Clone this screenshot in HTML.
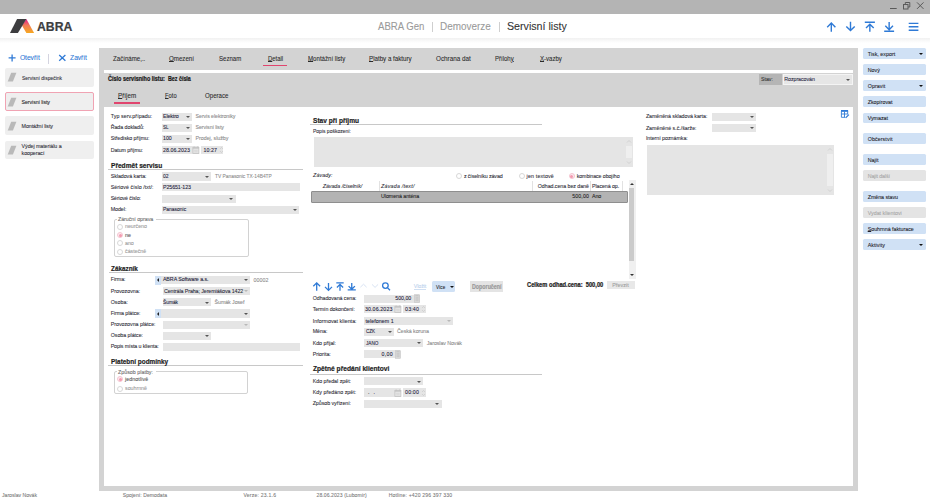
<!DOCTYPE html><html><head><meta charset="utf-8"><style>html,body{margin:0;padding:0;width:930px;height:500px;overflow:hidden;background:#fff;font-family:"Liberation Sans",sans-serif}body>div,body>span,body>svg{position:absolute}u{text-decoration-thickness:0.5px;text-underline-offset:0.3px}</style></head><body>
<div style="left:0px;top:0px;width:930.00px;height:14.00px;background:#b4b4b4;"></div>
<div style="left:0px;top:37.8px;width:930.00px;height:5.20px;background:linear-gradient(#f1f1f1,#fbfbfb 70%,#ffffff);"></div>
<svg style="left:886px;top:0px" width="44" height="13" viewBox="0 0 44 13"><g stroke="#5a5a5a" stroke-width="1" fill="none"><path d="M4 8.5h6.7"/><path d="M19.3 4.5v-2h4.5v4.5h-1.8"/><rect x="17.5" y="4.5" width="4.5" height="4.5" fill="#b4b4b4"/><path d="M31 2.4l6.5 6.5M37.5 2.4l-6.5 6.5"/></g></svg>
<svg style="left:9px;top:18px" width="28" height="16" viewBox="0 0 28 16"><defs><linearGradient id="lg" x1="0" y1="0" x2="0" y2="1"><stop offset="0" stop-color="#e4148c"/><stop offset="0.45" stop-color="#f07a5a"/><stop offset="1" stop-color="#f6a821"/></linearGradient></defs><path d="M17.4 0.9 L25.1 14.9 L17.4 14.9 L12.9 7.4 Z" fill="url(#lg)"/><path d="M8.1 0.9 L17.4 0.9 L8.9 14.9 L1 14.9 Z" fill="#3d3d3f"/></svg>
<svg style="left:820px;top:18px" width="105" height="18" viewBox="0 0 105 18"><g stroke="#2f7ad6" stroke-width="1.4" fill="none" stroke-linecap="butt"><path d="M11.3 5.2v8.6M7.2 9.2l4.1-4.1 4.1 4.1"/><path d="M30.5 3.7v8.8M26.3 8.4l4.2 4.2 4.2-4.2"/><path d="M44.8 4.3h10.1M49.85 6.2v7.6M46 10l3.85-3.85 3.85 3.85"/><path d="M64.2 13.2h9.9M69.15 4v7.6M65.3 7.8l3.85 3.85 3.85-3.85"/><path d="M88.7 5.4h9.7M88.7 8.8h9.7M88.7 12.2h9.7"/></g></svg>
<div style="left:432px;top:22px;width:1px;height:10px;background:#cfcfcf"></div>
<div style="left:499px;top:22px;width:1px;height:10px;background:#cfcfcf"></div>
<svg style="left:8px;top:54px" width="60" height="9" viewBox="0 0 60 9"><g stroke="#2f7ad6" stroke-width="1.3" fill="none"><path d="M0.6 3.8h7M4.1 0.4v7"/><path d="M51.2 1l6.2 5.7M57.4 1l-6.2 5.7"/></g></svg>
<div style="left:48.3px;top:53.9px;width:1.00px;height:9.70px;background:#d4d4e0;"></div>
<div style="left:5px;top:68px;width:89.00px;height:18.60px;background:#efefef;border-radius:2px;"></div>
<svg style="left:7px;top:72.3px" width="12" height="10" viewBox="0 0 12 10"><path d="M4.2 0.8h5.2L5.9 9.4H0.7Z" fill="#b9b9b9"/></svg>
<div style="left:5px;top:92.2px;width:89.00px;height:19.30px;background:#efefef;border:1px solid #f0a3b3;box-sizing:border-box;border-radius:2px;"></div>
<svg style="left:7px;top:96.8px" width="12" height="10" viewBox="0 0 12 10"><path d="M4.2 0.8h5.2L5.9 9.4H0.7Z" fill="#b9b9b9"/></svg>
<div style="left:5px;top:116.4px;width:89.00px;height:18.60px;background:#efefef;border-radius:2px;"></div>
<svg style="left:7px;top:120.7px" width="12" height="10" viewBox="0 0 12 10"><path d="M4.2 0.8h5.2L5.9 9.4H0.7Z" fill="#b9b9b9"/></svg>
<div style="left:5px;top:140.6px;width:89.00px;height:18.40px;background:#efefef;border-radius:2px;"></div>
<svg style="left:7px;top:144.8px" width="12" height="10" viewBox="0 0 12 10"><path d="M4.2 0.8h5.2L5.9 9.4H0.7Z" fill="#b9b9b9"/></svg>
<div style="left:99.2px;top:48px;width:758.80px;height:442.60px;background:#d3d3d3;"></div>
<div style="left:104px;top:69.6px;width:749.30px;height:3.20px;background:#ffffff;"></div>
<div style="left:104px;top:106.8px;width:749.20px;height:379.00px;background:#ffffff;"></div>
<div style="left:263px;top:64.6px;width:23.70px;height:1.30px;background:#e0456e;"></div>
<div style="left:113.8px;top:102.4px;width:26.60px;height:1.30px;background:#e0456e;"></div>
<div style="left:758.9px;top:73.9px;width:23.60px;height:10.70px;background:#b5b5b5;"></div>
<div style="left:782.5px;top:73.9px;width:70.20px;height:10.70px;background:#e6e6e6;border:1px solid #f4f4f4;box-sizing:border-box;"></div>
<div style="left:845.5px;top:78.5px;width:0;height:0;border-left:2.2px solid transparent;border-right:2.2px solid transparent;border-top:2.7px solid #555"></div>
<div style="left:162.4px;top:112.6px;width:29.70px;height:8.10px;background:#e5e5e5;"></div>
<div style="left:186.1px;top:115.9px;width:0;height:0;border-left:2.2px solid transparent;border-right:2.2px solid transparent;border-top:2.7px solid #555"></div>
<div style="left:162.4px;top:123.7px;width:29.70px;height:8.10px;background:#e5e5e5;"></div>
<div style="left:186.1px;top:127.0px;width:0;height:0;border-left:2.2px solid transparent;border-right:2.2px solid transparent;border-top:2.7px solid #555"></div>
<div style="left:162.4px;top:134.8px;width:29.70px;height:8.10px;background:#e5e5e5;"></div>
<div style="left:186.1px;top:138.1px;width:0;height:0;border-left:2.2px solid transparent;border-right:2.2px solid transparent;border-top:2.7px solid #555"></div>
<div style="left:162.4px;top:146px;width:36.60px;height:8.10px;background:#e5e5e5;"></div>
<svg style="left:192.0px;top:146.0px" width="8" height="8" viewBox="0 0 8 8"><g fill="none" stroke="#c2c2c2" stroke-width="0.8"><rect x="0.9" y="1.4" width="6" height="6"/><path d="M0.9 2.3h6M2.1 0.4v1.5M5.7 0.4v1.5"/><path d="M2.2 4.4h3.4M2.2 5.8h3.4" stroke="#d4d4d4"/></g></svg>
<div style="left:201.1px;top:146px;width:22.40px;height:8.10px;background:#e5e5e5;"></div>
<svg style="left:218.7px;top:146.0px" width="5" height="8" viewBox="0 0 5 8"><path d="M1 3l1.5-1.5L4 3M1 5l1.5 1.5L4 5" stroke="#c4c4c4" stroke-width="0.6" fill="none"/></svg>
<div style="left:108.2px;top:168.8px;width:194.50px;height:1.00px;background:#c8c8c8;"></div>
<div style="left:162.4px;top:172px;width:48.90px;height:8.90px;background:#e5e5e5;"></div>
<div style="left:204.9px;top:175.8px;width:0;height:0;border-left:2.2px solid transparent;border-right:2.2px solid transparent;border-top:2.7px solid #555"></div>
<div style="left:162.4px;top:183.4px;width:137.20px;height:8.10px;background:#e5e5e5;"></div>
<div style="left:162.4px;top:194.6px;width:73.30px;height:8.30px;background:#e5e5e5;"></div>
<div style="left:229.4px;top:197.9px;width:0;height:0;border-left:2.2px solid transparent;border-right:2.2px solid transparent;border-top:2.7px solid #555"></div>
<div style="left:162.4px;top:206px;width:136.40px;height:7.90px;background:#e5e5e5;"></div>
<div style="left:292.5px;top:209.1px;width:0;height:0;border-left:2.2px solid transparent;border-right:2.2px solid transparent;border-top:2.7px solid #555"></div>
<div style="left:113.6px;top:219.0px;width:135.0px;height:37.6px;border:1px solid #d2d2d2;box-sizing:border-box;border-radius:2px"></div>
<div style="left:116.5px;top:217.6px;width:39.20px;height:4.00px;background:#ffffff;"></div>
<div style="left:117.0px;top:223.5px;width:6.2px;height:6.2px;border-radius:50%;border:0.7px solid #d8d8d8;box-sizing:border-box"></div>
<div style="left:117.0px;top:231.9px;width:6.2px;height:6.2px;border-radius:50%;border:0.7px solid #f5c6d1;background:#fdeaf0;box-sizing:border-box"></div>
<div style="left:118.6px;top:233.5px;width:3px;height:3px;border-radius:50%;background:#f49bb0"></div>
<div style="left:117.0px;top:240.3px;width:6.2px;height:6.2px;border-radius:50%;border:0.7px solid #d8d8d8;box-sizing:border-box"></div>
<div style="left:117.0px;top:248.5px;width:6.2px;height:6.2px;border-radius:50%;border:0.7px solid #d8d8d8;box-sizing:border-box"></div>
<div style="left:108.6px;top:272.1px;width:194.30px;height:1.00px;background:#c8c8c8;"></div>
<div style="left:155.2px;top:276px;width:5.80px;height:8.60px;background:#d0e1f5;"></div>
<div style="left:156.9px;top:278.3px;width:0;height:0;border-top:2px solid transparent;border-bottom:2px solid transparent;border-right:2.4px solid #222"></div>
<div style="left:161px;top:276px;width:89.30px;height:8.30px;background:#e5e5e5;"></div>
<div style="left:243.7px;top:279.1px;width:0;height:0;border-left:2.2px solid transparent;border-right:2.2px solid transparent;border-top:2.7px solid #555"></div>
<div style="left:162.5px;top:287.3px;width:87.80px;height:8.20px;background:#e5e5e5;"></div>
<div style="left:164px;top:287.3px;width:79.5px;height:8.2px;overflow:hidden;position:absolute"></div>
<div style="left:243.3px;top:287.3px;width:2.70px;height:8.20px;background:#e5e5e5;"></div>
<div style="left:244.1px;top:290.4px;width:0;height:0;border-left:2.2px solid transparent;border-right:2.2px solid transparent;border-top:2.7px solid #b8b8b8"></div>
<div style="left:162.5px;top:298.2px;width:48.50px;height:8.20px;background:#e5e5e5;"></div>
<div style="left:204.7px;top:301.5px;width:0;height:0;border-left:2.2px solid transparent;border-right:2.2px solid transparent;border-top:2.7px solid #555"></div>
<div style="left:155.2px;top:309.4px;width:5.80px;height:8.60px;background:#d0e1f5;"></div>
<div style="left:156.9px;top:311.7px;width:0;height:0;border-top:2px solid transparent;border-bottom:2px solid transparent;border-right:2.4px solid #222"></div>
<div style="left:161px;top:309.4px;width:89.30px;height:8.20px;background:#e5e5e5;"></div>
<div style="left:243.7px;top:312.8px;width:0;height:0;border-left:2.2px solid transparent;border-right:2.2px solid transparent;border-top:2.7px solid #555"></div>
<div style="left:162.5px;top:320.7px;width:87.70px;height:8.20px;background:#e5e5e5;"></div>
<div style="left:243.9px;top:324.0px;width:0;height:0;border-left:2.2px solid transparent;border-right:2.2px solid transparent;border-top:2.7px solid #b8b8b8"></div>
<div style="left:162.5px;top:331.7px;width:48.60px;height:8.20px;background:#e5e5e5;"></div>
<div style="left:204.8px;top:335.1px;width:0;height:0;border-left:2.2px solid transparent;border-right:2.2px solid transparent;border-top:2.7px solid #555"></div>
<div style="left:163.1px;top:342.9px;width:136.60px;height:8.40px;background:#e5e5e5;"></div>
<div style="left:108.3px;top:365.3px;width:194.60px;height:1.00px;background:#c8c8c8;"></div>
<div style="left:113.7px;top:371.3px;width:134.8px;height:23.2px;border:1px solid #d2d2d2;box-sizing:border-box;border-radius:2px"></div>
<div style="left:116.5px;top:369.9px;width:39.00px;height:4.00px;background:#ffffff;"></div>
<div style="left:117.0px;top:376.3px;width:6.2px;height:6.2px;border-radius:50%;border:0.7px solid #f5c6d1;background:#fdeaf0;box-sizing:border-box"></div>
<div style="left:118.6px;top:377.9px;width:3px;height:3px;border-radius:50%;background:#f49bb0"></div>
<div style="left:117.0px;top:385.6px;width:6.2px;height:6.2px;border-radius:50%;border:0.7px solid #d8d8d8;box-sizing:border-box"></div>
<div style="left:309.8px;top:123.8px;width:232.70px;height:1.00px;background:#c8c8c8;"></div>
<div style="left:313.5px;top:137px;width:319.80px;height:29.80px;background:#e5e5e5;"></div>
<div style="left:626.2px;top:146px;width:6.10px;height:11.80px;background:#efefef;"></div>
<svg style="left:626.2px;top:139.0px" width="6" height="5" viewBox="0 0 6 5"><path d="M1 3.5L3 1.5 5 3.5" stroke="#c8c8c8" stroke-width="0.7" fill="none"/></svg>
<svg style="left:626.2px;top:159.8px" width="6" height="5" viewBox="0 0 6 5"><path d="M1 1.5L3 3.5 5 1.5" stroke="#c8c8c8" stroke-width="0.7" fill="none"/></svg>
<div style="left:456.1px;top:173.1px;width:6.2px;height:6.2px;border-radius:50%;border:0.7px solid #d8d8d8;box-sizing:border-box"></div>
<div style="left:518.8px;top:173.1px;width:6.2px;height:6.2px;border-radius:50%;border:0.7px solid #d8d8d8;box-sizing:border-box"></div>
<div style="left:568.5px;top:173.1px;width:6.2px;height:6.2px;border-radius:50%;border:0.7px solid #f5c6d1;background:#fdeaf0;box-sizing:border-box"></div>
<div style="left:570.1px;top:174.7px;width:3px;height:3px;border-radius:50%;background:#f49bb0"></div>
<div style="left:379.2px;top:180.5px;width:0.80px;height:10.00px;background:#e2e2e2;"></div>
<div style="left:532.4px;top:180.5px;width:0.80px;height:10.00px;background:#e2e2e2;"></div>
<div style="left:590.2px;top:180.5px;width:0.80px;height:10.00px;background:#e2e2e2;"></div>
<div style="left:622.3px;top:180.5px;width:0.80px;height:10.00px;background:#e2e2e2;"></div>
<div style="left:311.1px;top:190.9px;width:316.90px;height:12.10px;background:#b3b3b3;border:0.8px solid #8e8e8e;box-sizing:border-box;border-radius:1px;"></div>
<div style="left:628.7px;top:180.3px;width:7.20px;height:99.10px;background:#f0f0f0;"></div>
<div style="left:629.2px;top:188.2px;width:5.30px;height:73.20px;background:#cbcbcb;"></div>
<div style="left:629.9px;top:183px;width:0;height:0;border-left:2.4px solid transparent;border-right:2.4px solid transparent;border-bottom:2.8px solid #333"></div>
<div style="left:629.9px;top:274.4px;width:0;height:0;border-left:2.4px solid transparent;border-right:2.4px solid transparent;border-top:2.8px solid #333"></div>
<svg style="left:310px;top:280px" width="84" height="12" viewBox="0 0 84 12"><g stroke="#2f7ad6" stroke-width="1.3" fill="none"><path d="M6.7 3v7.8M3.3 6.3l3.4-3.4 3.4 3.4"/><path d="M18.5 2.9v7.4M15 6.9l3.5 3.5 3.5-3.5"/><path d="M26.3 2.9h7.4M30 4.6v6.2M26.9 7.5l3.1-3.1 3.1 3.1"/><path d="M37.7 9.9h8.1M41.75 2.9v6.2M38.6 6.1l3.15 3.15 3.15-3.15"/></g><g stroke="#d2dff0" stroke-width="0.9" fill="none"><path d="M50.4 7.2l3.1-3 3.1 3"/><path d="M62 4.4l3.05 3 3.05-3"/></g><g stroke="#2f7ad6" stroke-width="1.3" fill="none"><circle cx="75.4" cy="5.6" r="2.8"/><path d="M77.4 7.6l2.6 2.6"/></g></svg>
<div style="left:413.8px;top:289.4px;width:12.50px;height:0.50px;background:#d0dff2;"></div>
<div style="left:432px;top:280.8px;width:22.70px;height:11.00px;background:#d0e1f5;border-radius:1.5px;"></div>
<div style="left:449.5px;top:286.3px;width:0;height:0;border-left:2.2px solid transparent;border-right:2.2px solid transparent;border-top:2.7px solid #111"></div>
<div style="left:469.7px;top:280.6px;width:33.30px;height:11.70px;background:#e4e4e4;"></div>
<div style="left:606.7px;top:280.6px;width:28.60px;height:8.60px;background:#e8e8e8;"></div>
<div style="left:364.4px;top:294.9px;width:55.60px;height:7.80px;background:#e5e5e5;"></div>
<svg style="left:414.0px;top:294.3px" width="6" height="9" viewBox="0 0 6 9"><rect x="0.5" y="0.7" width="5" height="7.6" fill="#dadada" stroke="#c6c6c6" stroke-width="0.6"/><path d="M1.3 1.8h3.4" stroke="#c0c0c0" stroke-width="0.9"/><path d="M1.3 3.6h3.4M1.3 5h3.4M1.3 6.4h3.4M2.4 3v4.3M3.6 3v4.3" stroke="#c4c4c4" stroke-width="0.45"/></svg>
<div style="left:364.4px;top:305px;width:36.90px;height:8.20px;background:#e5e5e5;"></div>
<svg style="left:394.0px;top:305.1px" width="8" height="8" viewBox="0 0 8 8"><g fill="none" stroke="#c2c2c2" stroke-width="0.8"><rect x="0.9" y="1.4" width="6" height="6"/><path d="M0.9 2.3h6M2.1 0.4v1.5M5.7 0.4v1.5"/><path d="M2.2 4.4h3.4M2.2 5.8h3.4" stroke="#d4d4d4"/></g></svg>
<div style="left:403px;top:305px;width:22.80px;height:8.20px;background:#e5e5e5;"></div>
<svg style="left:420.5px;top:305.1px" width="5" height="8" viewBox="0 0 5 8"><path d="M1 3l1.5-1.5L4 3M1 5l1.5 1.5L4 5" stroke="#c4c4c4" stroke-width="0.6" fill="none"/></svg>
<div style="left:364.4px;top:317.1px;width:88.60px;height:8.10px;background:#e5e5e5;"></div>
<div style="left:446.6px;top:320.4px;width:0;height:0;border-left:2.2px solid transparent;border-right:2.2px solid transparent;border-top:2.7px solid #b8b8b8"></div>
<div style="left:364.4px;top:327.6px;width:29.70px;height:8.20px;background:#e5e5e5;"></div>
<div style="left:387.7px;top:331.0px;width:0;height:0;border-left:2.2px solid transparent;border-right:2.2px solid transparent;border-top:2.7px solid #555"></div>
<div style="left:364.4px;top:339px;width:58.50px;height:8.20px;background:#e5e5e5;"></div>
<div style="left:416.5px;top:342.3px;width:0;height:0;border-left:2.2px solid transparent;border-right:2.2px solid transparent;border-top:2.7px solid #555"></div>
<div style="left:364.4px;top:350px;width:36.10px;height:8.20px;background:#e5e5e5;"></div>
<svg style="left:394.6px;top:349.9px" width="6" height="9" viewBox="0 0 6 9"><rect x="0.5" y="0.7" width="5" height="7.6" fill="#dadada" stroke="#c6c6c6" stroke-width="0.6"/><path d="M1.3 1.8h3.4" stroke="#c0c0c0" stroke-width="0.9"/><path d="M1.3 3.6h3.4M1.3 5h3.4M1.3 6.4h3.4M2.4 3v4.3M3.6 3v4.3" stroke="#c4c4c4" stroke-width="0.45"/></svg>
<div style="left:310.2px;top:373.5px;width:232.30px;height:1.00px;background:#c8c8c8;"></div>
<div style="left:364.4px;top:377.3px;width:58.50px;height:8.20px;background:#e5e5e5;"></div>
<div style="left:416.5px;top:380.6px;width:0;height:0;border-left:2.2px solid transparent;border-right:2.2px solid transparent;border-top:2.7px solid #555"></div>
<div style="left:364.4px;top:388.4px;width:36.90px;height:8.20px;background:#e5e5e5;"></div>
<svg style="left:394.0px;top:388.5px" width="8" height="8" viewBox="0 0 8 8"><g fill="none" stroke="#c2c2c2" stroke-width="0.8"><rect x="0.9" y="1.4" width="6" height="6"/><path d="M0.9 2.3h6M2.1 0.4v1.5M5.7 0.4v1.5"/><path d="M2.2 4.4h3.4M2.2 5.8h3.4" stroke="#d4d4d4"/></g></svg>
<div style="left:403px;top:388.4px;width:22.80px;height:8.20px;background:#e5e5e5;"></div>
<svg style="left:420.5px;top:388.5px" width="5" height="8" viewBox="0 0 5 8"><path d="M1 3l1.5-1.5L4 3M1 5l1.5 1.5L4 5" stroke="#c4c4c4" stroke-width="0.6" fill="none"/></svg>
<div style="left:364.4px;top:399.5px;width:77.40px;height:8.20px;background:#e5e5e5;"></div>
<div style="left:435.4px;top:402.9px;width:0;height:0;border-left:2.2px solid transparent;border-right:2.2px solid transparent;border-top:2.7px solid #555"></div>
<div style="left:712px;top:112.9px;width:44.00px;height:8.10px;background:#e5e5e5;"></div>
<div style="left:749.7px;top:116.2px;width:0;height:0;border-left:2.2px solid transparent;border-right:2.2px solid transparent;border-top:2.7px solid #555"></div>
<div style="left:712px;top:124px;width:44.00px;height:8.00px;background:#e5e5e5;"></div>
<div style="left:749.7px;top:127.2px;width:0;height:0;border-left:2.2px solid transparent;border-right:2.2px solid transparent;border-top:2.7px solid #555"></div>
<div style="left:646.8px;top:144.5px;width:187.20px;height:50.00px;background:#e5e5e5;"></div>
<div style="left:827px;top:153.5px;width:6.00px;height:32.00px;background:#efefef;"></div>
<svg style="left:827.0px;top:146.5px" width="6" height="5" viewBox="0 0 6 5"><path d="M1 3.5L3 1.5 5 3.5" stroke="#c8c8c8" stroke-width="0.7" fill="none"/></svg>
<svg style="left:827.0px;top:187.5px" width="6" height="5" viewBox="0 0 6 5"><path d="M1 1.5L3 3.5 5 1.5" stroke="#c8c8c8" stroke-width="0.7" fill="none"/></svg>
<svg style="left:840px;top:109px" width="10" height="10" viewBox="0 0 10 10"><g fill="none" stroke="#2f7ad6"><path d="M1.4 8.3V2.2h6.3v3.2M1.4 8.3h3.6" stroke-width="0.9"/><path d="M1 1.8h7.1" stroke-width="1.6"/><path d="M4.5 2.5v5.8M1.4 5h6.3" stroke-width="0.9"/><path d="M5.6 8.9l3.3-3.3" stroke-width="1.3"/></g></svg>
<div style="left:863px;top:48.4px;width:62.80px;height:11.10px;background:#d0e1f5;border-radius:1.5px;"></div>
<div style="left:919.3px;top:53.0px;width:0;height:0;border-left:2.2px solid transparent;border-right:2.2px solid transparent;border-top:2.7px solid #111"></div>
<div style="left:863px;top:64.2px;width:62.80px;height:11.30px;background:#d0e1f5;border-radius:1.5px;"></div>
<div style="left:863px;top:80.2px;width:62.80px;height:11.30px;background:#d0e1f5;border-radius:1.5px;"></div>
<div style="left:919.3px;top:84.8px;width:0;height:0;border-left:2.2px solid transparent;border-right:2.2px solid transparent;border-top:2.7px solid #111"></div>
<div style="left:863px;top:96.4px;width:62.80px;height:11.00px;background:#d0e1f5;border-radius:1.5px;"></div>
<div style="left:863px;top:112.5px;width:62.80px;height:10.80px;background:#d0e1f5;border-radius:1.5px;"></div>
<div style="left:863px;top:133.2px;width:62.80px;height:11.20px;background:#d0e1f5;border-radius:1.5px;"></div>
<div style="left:863px;top:154.1px;width:62.80px;height:10.80px;background:#d0e1f5;border-radius:1.5px;"></div>
<div style="left:863px;top:170.1px;width:62.80px;height:10.80px;background:#e4e4e4;border-radius:1.5px;"></div>
<div style="left:863px;top:191.1px;width:62.80px;height:10.70px;background:#d0e1f5;border-radius:1.5px;"></div>
<div style="left:863px;top:207.3px;width:62.80px;height:10.60px;background:#e4e4e4;border-radius:1.5px;"></div>
<div style="left:863px;top:223.1px;width:62.80px;height:10.70px;background:#d0e1f5;border-radius:1.5px;"></div>
<div style="left:863px;top:239.1px;width:62.80px;height:10.80px;background:#d0e1f5;border-radius:1.5px;"></div>
<div style="left:919.3px;top:243.5px;width:0;height:0;border-left:2.2px solid transparent;border-right:2.2px solid transparent;border-top:2.7px solid #111"></div>
<span style="left:37px;top:21.00px;font-size:12.6px;line-height:12.6px;color:#3d3d3f;font-weight:700;font-style:normal;white-space:pre;-webkit-text-stroke:0.22px #3d3d3f;transform:scaleX(0.970);transform-origin:0 50%">ABRA</span>
<span style="left:377.9px;top:22.00px;font-size:10.2px;line-height:10.2px;color:#9a9a9a;font-weight:400;font-style:normal;white-space:pre;-webkit-text-stroke:0.08px #9a9a9a;transform:scaleX(0.940);transform-origin:0 50%">ABRA Gen</span>
<span style="left:440.4px;top:22.00px;font-size:10.2px;line-height:10.2px;color:#9a9a9a;font-weight:400;font-style:normal;white-space:pre;-webkit-text-stroke:0.08px #9a9a9a;transform:scaleX(0.975);transform-origin:0 50%">Demoverze</span>
<span style="left:506.6px;top:22.00px;font-size:10.2px;line-height:10.2px;color:#333333;font-weight:400;font-style:normal;white-space:pre;-webkit-text-stroke:0.08px #333333;transform:scaleX(1.046);transform-origin:0 50%">Servisní listy</span>
<span style="left:19.9px;top:55.00px;font-size:6.8px;line-height:6.8px;color:#2f7ad6;font-weight:400;font-style:normal;white-space:pre;-webkit-text-stroke:0.08px #2f7ad6;letter-spacing:-0.084px">Otevřít</span>
<span style="left:70.1px;top:55.00px;font-size:6.8px;line-height:6.8px;color:#2f7ad6;font-weight:400;font-style:normal;white-space:pre;-webkit-text-stroke:0.08px #2f7ad6;letter-spacing:-0.115px">Zavřít</span>
<span style="left:21.6px;top:76.00px;font-size:5.3px;line-height:5.3px;color:#2e2e38;font-weight:400;font-style:normal;white-space:pre;-webkit-text-stroke:0.08px #2e2e38;transform:scaleX(0.937);transform-origin:0 50%">Servisní dispečink</span>
<span style="left:21.6px;top:100.00px;font-size:5.3px;line-height:5.3px;color:#1e1e26;font-weight:400;font-style:normal;white-space:pre;-webkit-text-stroke:0.08px #1e1e26;letter-spacing:-0.103px">Servisní listy</span>
<span style="left:21.6px;top:124.00px;font-size:5.3px;line-height:5.3px;color:#2e2e38;font-weight:400;font-style:normal;white-space:pre;-webkit-text-stroke:0.08px #2e2e38;letter-spacing:-0.076px">Montážní listy</span>
<span style="left:21.6px;top:144.00px;font-size:5.3px;line-height:5.3px;color:#2e2e38;font-weight:400;font-style:normal;white-space:pre;-webkit-text-stroke:0.08px #2e2e38;letter-spacing:-0.059px">Výdej materiálu a</span>
<span style="left:21.6px;top:151.00px;font-size:5.3px;line-height:5.3px;color:#2e2e38;font-weight:400;font-style:normal;white-space:pre;-webkit-text-stroke:0.08px #2e2e38;letter-spacing:-0.058px">kooperací</span>
<span style="left:112.9px;top:56.00px;font-size:6.6px;line-height:6.6px;color:#2a2a2a;font-weight:400;font-style:normal;white-space:pre;-webkit-text-stroke:0.08px #2a2a2a;transform:scaleX(0.927);transform-origin:0 50%">Začínáme,..</span>
<span style="left:169.2px;top:56.00px;font-size:6.6px;line-height:6.6px;color:#2a2a2a;font-weight:400;font-style:normal;white-space:pre;-webkit-text-stroke:0.08px #2a2a2a;transform:scaleX(0.934);transform-origin:0 50%"><u>O</u>mezení</span>
<span style="left:218.7px;top:56.00px;font-size:6.6px;line-height:6.6px;color:#2a2a2a;font-weight:400;font-style:normal;white-space:pre;-webkit-text-stroke:0.08px #2a2a2a;transform:scaleX(0.917);transform-origin:0 50%">Seznam</span>
<span style="left:267.7px;top:56.00px;font-size:6.6px;line-height:6.6px;color:#2a2a2a;font-weight:400;font-style:normal;white-space:pre;-webkit-text-stroke:0.08px #2a2a2a;transform:scaleX(0.895);transform-origin:0 50%"><u>D</u>etail</span>
<span style="left:308.4px;top:56.00px;font-size:6.6px;line-height:6.6px;color:#2a2a2a;font-weight:400;font-style:normal;white-space:pre;-webkit-text-stroke:0.08px #2a2a2a;transform:scaleX(0.927);transform-origin:0 50%"><u>M</u>ontážní listy</span>
<span style="left:369.3px;top:56.00px;font-size:6.6px;line-height:6.6px;color:#2a2a2a;font-weight:400;font-style:normal;white-space:pre;-webkit-text-stroke:0.08px #2a2a2a;transform:scaleX(0.939);transform-origin:0 50%"><u>P</u>latby a faktury</span>
<span style="left:435.5px;top:56.00px;font-size:6.6px;line-height:6.6px;color:#2a2a2a;font-weight:400;font-style:normal;white-space:pre;-webkit-text-stroke:0.08px #2a2a2a;transform:scaleX(0.956);transform-origin:0 50%">Ochrana dat</span>
<span style="left:495.2px;top:56.00px;font-size:6.6px;line-height:6.6px;color:#2a2a2a;font-weight:400;font-style:normal;white-space:pre;-webkit-text-stroke:0.08px #2a2a2a;transform:scaleX(0.911);transform-origin:0 50%">Příloh<u>y</u></span>
<span style="left:539.5px;top:56.00px;font-size:6.6px;line-height:6.6px;color:#2a2a2a;font-weight:400;font-style:normal;white-space:pre;-webkit-text-stroke:0.08px #2a2a2a;transform:scaleX(0.919);transform-origin:0 50%"><u>X</u>-vazby</span>
<span style="left:107.7px;top:76.00px;font-size:6.6px;line-height:6.6px;color:#1a1a1a;font-weight:700;font-style:normal;white-space:pre;-webkit-text-stroke:0.22px #1a1a1a;transform:scaleX(0.829);transform-origin:0 50%">Číslo servisního listu:</span>
<span style="left:168px;top:76.00px;font-size:6.6px;line-height:6.6px;color:#1a1a1a;font-weight:700;font-style:normal;white-space:pre;-webkit-text-stroke:0.22px #1a1a1a;transform:scaleX(0.808);transform-origin:0 50%">Bez čísla</span>
<span style="left:118px;top:93.00px;font-size:6.6px;line-height:6.6px;color:#2a2a2a;font-weight:400;font-style:normal;white-space:pre;-webkit-text-stroke:0.08px #2a2a2a;transform:scaleX(0.950);transform-origin:0 50%"><u>P</u>říjem</span>
<span style="left:165px;top:93.00px;font-size:6.6px;line-height:6.6px;color:#2a2a2a;font-weight:400;font-style:normal;white-space:pre;-webkit-text-stroke:0.08px #2a2a2a;transform:scaleX(0.879);transform-origin:0 50%"><u>F</u>oto</span>
<span style="left:205.3px;top:93.00px;font-size:6.6px;line-height:6.6px;color:#2a2a2a;font-weight:400;font-style:normal;white-space:pre;-webkit-text-stroke:0.08px #2a2a2a;transform:scaleX(0.925);transform-origin:0 50%">Operace</span>
<span style="left:760.9px;top:77.00px;font-size:5.3px;line-height:5.3px;color:#333;font-weight:400;font-style:normal;white-space:pre;-webkit-text-stroke:0.08px #333;letter-spacing:0.005px">Stav:</span>
<span style="left:784.3px;top:77.00px;font-size:5.3px;line-height:5.3px;color:#2a2a44;font-weight:400;font-style:normal;white-space:pre;-webkit-text-stroke:0.08px #2a2a44;letter-spacing:-0.062px">Rozpracován</span>
<span style="left:110.7px;top:114.00px;font-size:5.3px;line-height:5.3px;color:#2e2e38;font-weight:400;font-style:normal;white-space:pre;-webkit-text-stroke:0.08px #2e2e38;letter-spacing:0.061px">Typ serv.případu:</span>
<span style="left:110.7px;top:125.00px;font-size:5.3px;line-height:5.3px;color:#2e2e38;font-weight:400;font-style:normal;white-space:pre;-webkit-text-stroke:0.08px #2e2e38;letter-spacing:-0.048px">Řada dokladů:</span>
<span style="left:110.7px;top:136.00px;font-size:5.3px;line-height:5.3px;color:#2e2e38;font-weight:400;font-style:normal;white-space:pre;-webkit-text-stroke:0.08px #2e2e38;letter-spacing:-0.066px">Středisko příjmu:</span>
<span style="left:110.7px;top:148.00px;font-size:5.3px;line-height:5.3px;color:#2e2e38;font-weight:400;font-style:normal;white-space:pre;-webkit-text-stroke:0.08px #2e2e38;letter-spacing:-0.072px">Datum příjmu:</span>
<span style="left:163px;top:114.00px;font-size:5.3px;line-height:5.3px;color:#20203a;font-weight:400;font-style:normal;white-space:pre;-webkit-text-stroke:0.08px #20203a;letter-spacing:-0.117px">Elektro</span>
<span style="left:195.6px;top:114.00px;font-size:5.3px;line-height:5.3px;color:#8a8a8a;font-weight:400;font-style:normal;white-space:pre;-webkit-text-stroke:0.08px #8a8a8a;letter-spacing:-0.095px">Servis elektroniky</span>
<span style="left:163px;top:125.00px;font-size:5.3px;line-height:5.3px;color:#20203a;font-weight:400;font-style:normal;white-space:pre;-webkit-text-stroke:0.08px #20203a;transform:scaleX(0.864);transform-origin:0 50%">SL</span>
<span style="left:195.6px;top:125.00px;font-size:5.3px;line-height:5.3px;color:#8a8a8a;font-weight:400;font-style:normal;white-space:pre;-webkit-text-stroke:0.08px #8a8a8a;letter-spacing:-0.110px">Servisní listy</span>
<span style="left:163px;top:136.00px;font-size:5.3px;line-height:5.3px;color:#20203a;font-weight:400;font-style:normal;white-space:pre;-webkit-text-stroke:0.08px #20203a;letter-spacing:-0.022px">100</span>
<span style="left:195.6px;top:136.00px;font-size:5.3px;line-height:5.3px;color:#8a8a8a;font-weight:400;font-style:normal;white-space:pre;-webkit-text-stroke:0.08px #8a8a8a;letter-spacing:-0.037px">Prodej, služby</span>
<span style="left:163px;top:148.00px;font-size:5.3px;line-height:5.3px;color:#20203a;font-weight:400;font-style:normal;white-space:pre;-webkit-text-stroke:0.08px #20203a;letter-spacing:0.054px">28.06.2023</span>
<span style="left:203.5px;top:148.00px;font-size:5.3px;line-height:5.3px;color:#20203a;font-weight:400;font-style:normal;white-space:pre;-webkit-text-stroke:0.08px #20203a;letter-spacing:0.059px">10:27</span>
<span style="left:110.7px;top:162.00px;font-size:7.8px;line-height:7.8px;color:#1e1e1e;font-weight:700;font-style:normal;white-space:pre;-webkit-text-stroke:0.22px #1e1e1e;transform:scaleX(0.845);transform-origin:0 50%">Předmět servisu</span>
<span style="left:110.7px;top:174.00px;font-size:5.3px;line-height:5.3px;color:#2e2e38;font-weight:400;font-style:normal;white-space:pre;-webkit-text-stroke:0.08px #2e2e38;letter-spacing:-0.044px">Skladová karta:</span>
<span style="left:163px;top:174.00px;font-size:5.3px;line-height:5.3px;color:#20203a;font-weight:400;font-style:normal;white-space:pre;-webkit-text-stroke:0.08px #20203a;transform:scaleX(0.948);transform-origin:0 50%">02</span>
<span style="left:215.1px;top:174.00px;font-size:5.3px;line-height:5.3px;color:#8a8a8a;font-weight:400;font-style:normal;white-space:pre;-webkit-text-stroke:0.08px #8a8a8a;transform:scaleX(0.916);transform-origin:0 50%">TV Panasonic TX-14B4TP</span>
<span style="left:110.7px;top:185.00px;font-size:5.3px;line-height:5.3px;color:#2e2e38;font-weight:400;font-style:normal;white-space:pre;-webkit-text-stroke:0.08px #2e2e38;letter-spacing:0.057px">Sériové číslo /txt/:</span>
<span style="left:163px;top:185.00px;font-size:5.3px;line-height:5.3px;color:#20203a;font-weight:400;font-style:normal;white-space:pre;-webkit-text-stroke:0.08px #20203a;letter-spacing:-0.097px">P25651-123</span>
<span style="left:110.7px;top:196.00px;font-size:5.3px;line-height:5.3px;color:#2e2e38;font-weight:400;font-style:normal;white-space:pre;-webkit-text-stroke:0.08px #2e2e38;letter-spacing:-0.115px">Sériové číslo:</span>
<span style="left:110.7px;top:207.00px;font-size:5.3px;line-height:5.3px;color:#2e2e38;font-weight:400;font-style:normal;white-space:pre;-webkit-text-stroke:0.08px #2e2e38;letter-spacing:-0.041px">Model:</span>
<span style="left:163px;top:207.00px;font-size:5.3px;line-height:5.3px;color:#20203a;font-weight:400;font-style:normal;white-space:pre;-webkit-text-stroke:0.08px #20203a;transform:scaleX(0.937);transform-origin:0 50%">Panasonic</span>
<span style="left:118px;top:217.00px;font-size:5.3px;line-height:5.3px;color:#6e6e6e;font-weight:400;font-style:normal;white-space:pre;-webkit-text-stroke:0.08px #6e6e6e;letter-spacing:-0.033px">Záruční oprava</span>
<span style="left:125px;top:224.00px;font-size:5.3px;line-height:5.3px;color:#9a9a9a;font-weight:400;font-style:normal;white-space:pre;-webkit-text-stroke:0.08px #9a9a9a;letter-spacing:-0.013px">neurčeno</span>
<span style="left:125px;top:233.00px;font-size:5.3px;line-height:5.3px;color:#555;font-weight:400;font-style:normal;white-space:pre;-webkit-text-stroke:0.08px #555;letter-spacing:-0.006px">ne</span>
<span style="left:125px;top:241.00px;font-size:5.3px;line-height:5.3px;color:#9a9a9a;font-weight:400;font-style:normal;white-space:pre;-webkit-text-stroke:0.08px #9a9a9a;letter-spacing:-0.022px">ano</span>
<span style="left:125px;top:249.00px;font-size:5.3px;line-height:5.3px;color:#9a9a9a;font-weight:400;font-style:normal;white-space:pre;-webkit-text-stroke:0.08px #9a9a9a;letter-spacing:-0.000px">částečně</span>
<span style="left:111px;top:265.00px;font-size:7.8px;line-height:7.8px;color:#1e1e1e;font-weight:700;font-style:normal;white-space:pre;-webkit-text-stroke:0.22px #1e1e1e;transform:scaleX(0.814);transform-origin:0 50%">Zákazník</span>
<span style="left:110.7px;top:277.00px;font-size:5.3px;line-height:5.3px;color:#2e2e38;font-weight:400;font-style:normal;white-space:pre;-webkit-text-stroke:0.08px #2e2e38;letter-spacing:-0.023px">Firma:</span>
<span style="left:162.9px;top:277.00px;font-size:5.3px;line-height:5.3px;color:#20203a;font-weight:400;font-style:normal;white-space:pre;-webkit-text-stroke:0.08px #20203a;letter-spacing:-0.049px">ABRA Software a.s.</span>
<span style="left:253.5px;top:278.00px;font-size:5.3px;line-height:5.3px;color:#8a8a8a;font-weight:400;font-style:normal;white-space:pre;-webkit-text-stroke:0.08px #8a8a8a;letter-spacing:0.066px">00002</span>
<span style="left:110.7px;top:289.00px;font-size:5.3px;line-height:5.3px;color:#2e2e38;font-weight:400;font-style:normal;white-space:pre;-webkit-text-stroke:0.08px #2e2e38;letter-spacing:0.005px">Provozovna:</span>
<span style="left:164px;top:289.00px;font-size:5.3px;line-height:5.3px;color:#2a2a3a;font-weight:400;font-style:normal;white-space:pre;-webkit-text-stroke:0.08px #2a2a3a;letter-spacing:-0.083px">Centrála Praha; Jeremiášova 1422</span>
<span style="left:110.7px;top:300.00px;font-size:5.3px;line-height:5.3px;color:#2e2e38;font-weight:400;font-style:normal;white-space:pre;-webkit-text-stroke:0.08px #2e2e38;letter-spacing:0.064px">Osoba:</span>
<span style="left:163px;top:300.00px;font-size:5.3px;line-height:5.3px;color:#20203a;font-weight:400;font-style:normal;white-space:pre;-webkit-text-stroke:0.08px #20203a;transform:scaleX(0.909);transform-origin:0 50%">Šumák</span>
<span style="left:214.6px;top:300.00px;font-size:5.3px;line-height:5.3px;color:#8a8a8a;font-weight:400;font-style:normal;white-space:pre;-webkit-text-stroke:0.08px #8a8a8a;letter-spacing:-0.082px">Šumák Josef</span>
<span style="left:110.7px;top:311.00px;font-size:5.3px;line-height:5.3px;color:#2e2e38;font-weight:400;font-style:normal;white-space:pre;-webkit-text-stroke:0.08px #2e2e38;letter-spacing:-0.060px">Firma plátce:</span>
<span style="left:110.7px;top:322.00px;font-size:5.3px;line-height:5.3px;color:#2e2e38;font-weight:400;font-style:normal;white-space:pre;-webkit-text-stroke:0.08px #2e2e38;letter-spacing:-0.010px">Provozovna plátce:</span>
<span style="left:110.7px;top:333.00px;font-size:5.3px;line-height:5.3px;color:#2e2e38;font-weight:400;font-style:normal;white-space:pre;-webkit-text-stroke:0.08px #2e2e38;letter-spacing:-0.024px">Osoba plátce:</span>
<span style="left:110.7px;top:344.00px;font-size:5.3px;line-height:5.3px;color:#2e2e38;font-weight:400;font-style:normal;white-space:pre;-webkit-text-stroke:0.08px #2e2e38;letter-spacing:-0.107px">Popis místa u klienta:</span>
<span style="left:110.9px;top:358.00px;font-size:7.8px;line-height:7.8px;color:#1e1e1e;font-weight:700;font-style:normal;white-space:pre;-webkit-text-stroke:0.22px #1e1e1e;transform:scaleX(0.825);transform-origin:0 50%">Platební podmínky</span>
<span style="left:118px;top:370.00px;font-size:5.3px;line-height:5.3px;color:#6e6e6e;font-weight:400;font-style:normal;white-space:pre;-webkit-text-stroke:0.08px #6e6e6e;letter-spacing:0.019px">Způsob platby:</span>
<span style="left:125px;top:377.00px;font-size:5.3px;line-height:5.3px;color:#555;font-weight:400;font-style:normal;white-space:pre;-webkit-text-stroke:0.08px #555;letter-spacing:0.079px">jednotlivě</span>
<span style="left:125px;top:386.00px;font-size:5.3px;line-height:5.3px;color:#9a9a9a;font-weight:400;font-style:normal;white-space:pre;-webkit-text-stroke:0.08px #9a9a9a;letter-spacing:-0.013px">souhrnně</span>
<span style="left:312.7px;top:117.00px;font-size:7.8px;line-height:7.8px;color:#1e1e1e;font-weight:700;font-style:normal;white-space:pre;-webkit-text-stroke:0.22px #1e1e1e;transform:scaleX(0.844);transform-origin:0 50%">Stav při příjmu</span>
<span style="left:312.7px;top:129.00px;font-size:5.3px;line-height:5.3px;color:#2e2e38;font-weight:400;font-style:normal;white-space:pre;-webkit-text-stroke:0.08px #2e2e38;transform:scaleX(0.942);transform-origin:0 50%">Popis poškození:</span>
<span style="left:313.1px;top:173.00px;font-size:5.3px;line-height:5.3px;color:#2e2e38;font-weight:400;font-style:italic;white-space:pre;-webkit-text-stroke:0.08px #2e2e38;letter-spacing:0.076px">Závady:</span>
<span style="left:463.9px;top:174.00px;font-size:5.3px;line-height:5.3px;color:#2e2e38;font-weight:400;font-style:normal;white-space:pre;-webkit-text-stroke:0.08px #2e2e38;letter-spacing:-0.115px">z číselníku závad</span>
<span style="left:526.6px;top:174.00px;font-size:5.3px;line-height:5.3px;color:#2e2e38;font-weight:400;font-style:normal;white-space:pre;-webkit-text-stroke:0.08px #2e2e38;letter-spacing:0.157px">jen textově</span>
<span style="left:576.7px;top:174.00px;font-size:5.3px;line-height:5.3px;color:#2e2e38;font-weight:400;font-style:normal;white-space:pre;-webkit-text-stroke:0.08px #2e2e38;letter-spacing:-0.098px">kombinace obojího</span>
<span style="left:322.7px;top:184.00px;font-size:5.3px;line-height:5.3px;color:#2e2e38;font-weight:400;font-style:italic;white-space:pre;-webkit-text-stroke:0.08px #2e2e38;letter-spacing:-0.028px">Závada /číselník/</span>
<span style="left:381.1px;top:184.00px;font-size:5.3px;line-height:5.3px;color:#2e2e38;font-weight:400;font-style:italic;white-space:pre;-webkit-text-stroke:0.08px #2e2e38;letter-spacing:0.223px">Závada /text/</span>
<span style="left:537.8px;top:184.00px;font-size:5.3px;line-height:5.3px;color:#2e2e38;font-weight:400;font-style:normal;white-space:pre;-webkit-text-stroke:0.08px #2e2e38;letter-spacing:-0.058px">Odhad.cena bez daně</span>
<span style="left:592px;top:184.00px;font-size:5.3px;line-height:5.3px;color:#2e2e38;font-weight:400;font-style:normal;white-space:pre;-webkit-text-stroke:0.08px #2e2e38;letter-spacing:-0.078px">Placená op.</span>
<span style="left:381.1px;top:194.00px;font-size:5.3px;line-height:5.3px;color:#1e1e1e;font-weight:400;font-style:normal;white-space:pre;-webkit-text-stroke:0.08px #1e1e1e;letter-spacing:-0.060px">Ulomená anténa</span>
<span style="left:572.2px;top:194.00px;font-size:5.3px;line-height:5.3px;color:#1e1e1e;font-weight:400;font-style:normal;white-space:pre;-webkit-text-stroke:0.08px #1e1e1e;letter-spacing:0.099px">500,00</span>
<span style="left:592px;top:194.00px;font-size:5.3px;line-height:5.3px;color:#1e1e1e;font-weight:400;font-style:normal;white-space:pre;-webkit-text-stroke:0.08px #1e1e1e;letter-spacing:-0.119px">Ano</span>
<span style="left:413.8px;top:284.00px;font-size:5.3px;line-height:5.3px;color:#bcd2ee;font-weight:400;font-style:normal;white-space:pre;-webkit-text-stroke:0.08px #bcd2ee;letter-spacing:-0.091px">Vložit</span>
<span style="left:435.9px;top:285.00px;font-size:5.3px;line-height:5.3px;color:#1e1e1e;font-weight:400;font-style:normal;white-space:pre;-webkit-text-stroke:0.08px #1e1e1e;transform:scaleX(0.867);transform-origin:0 50%">Více</span>
<span style="left:471.5px;top:284.00px;font-size:6.6px;line-height:6.6px;color:#9a9a9a;font-weight:700;font-style:normal;white-space:pre;-webkit-text-stroke:0.22px #9a9a9a;transform:scaleX(0.805);transform-origin:0 50%">Doporučení</span>
<span style="left:526.7px;top:282.00px;font-size:6.8px;line-height:6.8px;color:#222;font-weight:700;font-style:normal;white-space:pre;-webkit-text-stroke:0.22px #222;transform:scaleX(0.841);transform-origin:0 50%">Celkem odhad.cena:  500,00</span>
<span style="left:612.3px;top:283.00px;font-size:5.3px;line-height:5.3px;color:#9c9c9c;font-weight:400;font-style:normal;white-space:pre;-webkit-text-stroke:0.08px #9c9c9c;letter-spacing:0.003px">Převzít</span>
<span style="left:312.7px;top:296.00px;font-size:5.3px;line-height:5.3px;color:#2e2e38;font-weight:400;font-style:normal;white-space:pre;-webkit-text-stroke:0.08px #2e2e38;letter-spacing:-0.058px">Odhadovaná cena:</span>
<span style="left:395.3px;top:296.00px;font-size:5.3px;line-height:5.3px;color:#20203a;font-weight:400;font-style:normal;white-space:pre;-webkit-text-stroke:0.08px #20203a;letter-spacing:-0.041px">500,00</span>
<span style="left:312.7px;top:307.00px;font-size:5.3px;line-height:5.3px;color:#2e2e38;font-weight:400;font-style:normal;white-space:pre;-webkit-text-stroke:0.08px #2e2e38;letter-spacing:-0.086px">Termín dokončení:</span>
<span style="left:364.9px;top:307.00px;font-size:5.3px;line-height:5.3px;color:#20203a;font-weight:400;font-style:normal;white-space:pre;-webkit-text-stroke:0.08px #20203a;letter-spacing:0.109px">30.06.2023</span>
<span style="left:405.1px;top:307.00px;font-size:5.3px;line-height:5.3px;color:#20203a;font-weight:400;font-style:normal;white-space:pre;-webkit-text-stroke:0.08px #20203a;letter-spacing:0.134px">03:40</span>
<span style="left:312.7px;top:319.00px;font-size:5.3px;line-height:5.3px;color:#2e2e38;font-weight:400;font-style:normal;white-space:pre;-webkit-text-stroke:0.08px #2e2e38;letter-spacing:0.034px">Informovat klienta:</span>
<span style="left:365.6px;top:319.00px;font-size:5.3px;line-height:5.3px;color:#20203a;font-weight:400;font-style:normal;white-space:pre;-webkit-text-stroke:0.08px #20203a;letter-spacing:0.031px">telefonem 1</span>
<span style="left:312.7px;top:329.00px;font-size:5.3px;line-height:5.3px;color:#2e2e38;font-weight:400;font-style:normal;white-space:pre;-webkit-text-stroke:0.08px #2e2e38;letter-spacing:-0.009px">Měna:</span>
<span style="left:365.6px;top:329.00px;font-size:5.3px;line-height:5.3px;color:#20203a;font-weight:400;font-style:normal;white-space:pre;-webkit-text-stroke:0.08px #20203a;transform:scaleX(0.858);transform-origin:0 50%">CZK</span>
<span style="left:397px;top:329.00px;font-size:5.3px;line-height:5.3px;color:#8a8a8a;font-weight:400;font-style:normal;white-space:pre;-webkit-text-stroke:0.08px #8a8a8a;letter-spacing:-0.072px">Česká koruna</span>
<span style="left:312.7px;top:341.00px;font-size:5.3px;line-height:5.3px;color:#2e2e38;font-weight:400;font-style:normal;white-space:pre;-webkit-text-stroke:0.08px #2e2e38;letter-spacing:-0.026px">Kdo přijal:</span>
<span style="left:365.6px;top:341.00px;font-size:5.3px;line-height:5.3px;color:#20203a;font-weight:400;font-style:normal;white-space:pre;-webkit-text-stroke:0.08px #20203a;transform:scaleX(0.884);transform-origin:0 50%">JANO</span>
<span style="left:426.8px;top:341.00px;font-size:5.3px;line-height:5.3px;color:#8a8a8a;font-weight:400;font-style:normal;white-space:pre;-webkit-text-stroke:0.08px #8a8a8a;letter-spacing:-0.086px">Jaroslav Novák</span>
<span style="left:312.7px;top:352.00px;font-size:5.3px;line-height:5.3px;color:#2e2e38;font-weight:400;font-style:normal;white-space:pre;-webkit-text-stroke:0.08px #2e2e38;letter-spacing:-0.019px">Priorita:</span>
<span style="left:381.6px;top:352.00px;font-size:5.3px;line-height:5.3px;color:#20203a;font-weight:400;font-style:normal;white-space:pre;-webkit-text-stroke:0.08px #20203a;letter-spacing:0.262px">0,00</span>
<span style="left:312.7px;top:365.00px;font-size:7.8px;line-height:7.8px;color:#1e1e1e;font-weight:700;font-style:normal;white-space:pre;-webkit-text-stroke:0.22px #1e1e1e;transform:scaleX(0.851);transform-origin:0 50%">Zpětné předání klientovi</span>
<span style="left:312.7px;top:379.00px;font-size:5.3px;line-height:5.3px;color:#2e2e38;font-weight:400;font-style:normal;white-space:pre;-webkit-text-stroke:0.08px #2e2e38;letter-spacing:-0.012px">Kdo předal zpět:</span>
<span style="left:312.7px;top:390.00px;font-size:5.3px;line-height:5.3px;color:#2e2e38;font-weight:400;font-style:normal;white-space:pre;-webkit-text-stroke:0.08px #2e2e38;letter-spacing:0.038px">Kdy předáno zpět:</span>
<span style="left:366px;top:390.00px;font-size:5.3px;line-height:5.3px;color:#20203a;font-weight:400;font-style:normal;white-space:pre;-webkit-text-stroke:0.08px #20203a;letter-spacing:0.410px"> .  .</span>
<span style="left:405.1px;top:390.00px;font-size:5.3px;line-height:5.3px;color:#20203a;font-weight:400;font-style:normal;white-space:pre;-webkit-text-stroke:0.08px #20203a;letter-spacing:0.134px">00:00</span>
<span style="left:312.7px;top:401.00px;font-size:5.3px;line-height:5.3px;color:#2e2e38;font-weight:400;font-style:normal;white-space:pre;-webkit-text-stroke:0.08px #2e2e38;letter-spacing:-0.050px">Způsob vyřízení:</span>
<span style="left:645.9px;top:114.00px;font-size:5.3px;line-height:5.3px;color:#2e2e38;font-weight:400;font-style:normal;white-space:pre;-webkit-text-stroke:0.08px #2e2e38;letter-spacing:-0.040px">Zaměněná skladová karta:</span>
<span style="left:645.9px;top:126.00px;font-size:5.3px;line-height:5.3px;color:#2e2e38;font-weight:400;font-style:normal;white-space:pre;-webkit-text-stroke:0.08px #2e2e38;letter-spacing:-0.012px">Zaměněné s.č./šarže:</span>
<span style="left:645.9px;top:136.00px;font-size:5.3px;line-height:5.3px;color:#2e2e38;font-weight:400;font-style:normal;white-space:pre;-webkit-text-stroke:0.08px #2e2e38;letter-spacing:-0.032px">Interní poznámka:</span>
<span style="left:867.7px;top:52.00px;font-size:5.3px;line-height:5.3px;color:#222228;font-weight:400;font-style:normal;white-space:pre;-webkit-text-stroke:0.08px #222228;letter-spacing:0.037px">Tisk, export</span>
<span style="left:867.7px;top:68.00px;font-size:5.3px;line-height:5.3px;color:#222228;font-weight:400;font-style:normal;white-space:pre;-webkit-text-stroke:0.08px #222228;letter-spacing:0.007px">Nový</span>
<span style="left:867.7px;top:84.00px;font-size:5.3px;line-height:5.3px;color:#222228;font-weight:400;font-style:normal;white-space:pre;-webkit-text-stroke:0.08px #222228;letter-spacing:0.070px">Opravit</span>
<span style="left:867.7px;top:100.00px;font-size:5.3px;line-height:5.3px;color:#222228;font-weight:400;font-style:normal;white-space:pre;-webkit-text-stroke:0.08px #222228;letter-spacing:-0.037px">Zkopírovat</span>
<span style="left:867.7px;top:116.00px;font-size:5.3px;line-height:5.3px;color:#222228;font-weight:400;font-style:normal;white-space:pre;-webkit-text-stroke:0.08px #222228;letter-spacing:-0.037px">Vymazat</span>
<span style="left:867.7px;top:137.00px;font-size:5.3px;line-height:5.3px;color:#222228;font-weight:400;font-style:normal;white-space:pre;-webkit-text-stroke:0.08px #222228;letter-spacing:0.095px">Občerstvit</span>
<span style="left:867.7px;top:158.00px;font-size:5.3px;line-height:5.3px;color:#222228;font-weight:400;font-style:normal;white-space:pre;-webkit-text-stroke:0.08px #222228;letter-spacing:-0.027px">Najít</span>
<span style="left:867.7px;top:174.00px;font-size:5.3px;line-height:5.3px;color:#a6a6a6;font-weight:400;font-style:normal;white-space:pre;-webkit-text-stroke:0.08px #a6a6a6;letter-spacing:-0.136px">Najít další</span>
<span style="left:867.7px;top:195.00px;font-size:5.3px;line-height:5.3px;color:#222228;font-weight:400;font-style:normal;white-space:pre;-webkit-text-stroke:0.08px #222228;letter-spacing:-0.033px">Změna stavu</span>
<span style="left:867.7px;top:211.00px;font-size:5.3px;line-height:5.3px;color:#a6a6a6;font-weight:400;font-style:normal;white-space:pre;-webkit-text-stroke:0.08px #a6a6a6;letter-spacing:0.009px">Vydat klientovi</span>
<span style="left:867.7px;top:227.00px;font-size:5.3px;line-height:5.3px;color:#222228;font-weight:400;font-style:normal;white-space:pre;-webkit-text-stroke:0.08px #222228;letter-spacing:-0.009px"><u>S</u>ouhrnná fakturace</span>
<span style="left:867.7px;top:243.00px;font-size:5.3px;line-height:5.3px;color:#222228;font-weight:400;font-style:normal;white-space:pre;-webkit-text-stroke:0.08px #222228;letter-spacing:0.074px">Aktivity</span>
<span style="left:2px;top:493.00px;font-size:5.1px;line-height:5.1px;color:#7a7a7a;font-weight:400;font-style:normal;white-space:pre;-webkit-text-stroke:0.08px #7a7a7a;letter-spacing:0.013px">Jaroslav Novák</span>
<span style="left:122.7px;top:493.00px;font-size:5.1px;line-height:5.1px;color:#7a7a7a;font-weight:400;font-style:normal;white-space:pre;-webkit-text-stroke:0.08px #7a7a7a;letter-spacing:0.043px">Spojení: Demodata</span>
<span style="left:243.4px;top:493.00px;font-size:5.1px;line-height:5.1px;color:#7a7a7a;font-weight:400;font-style:normal;white-space:pre;-webkit-text-stroke:0.08px #7a7a7a;letter-spacing:0.214px">Verze: 23.1.6</span>
<span style="left:316.5px;top:493.00px;font-size:5.1px;line-height:5.1px;color:#7a7a7a;font-weight:400;font-style:normal;white-space:pre;-webkit-text-stroke:0.08px #7a7a7a;letter-spacing:0.068px">28.06.2023 (Lubomír)</span>
<span style="left:388.7px;top:493.00px;font-size:5.1px;line-height:5.1px;color:#7a7a7a;font-weight:400;font-style:normal;white-space:pre;-webkit-text-stroke:0.08px #7a7a7a;letter-spacing:0.141px">Hotline: +420 296 397 330</span>
</body></html>
